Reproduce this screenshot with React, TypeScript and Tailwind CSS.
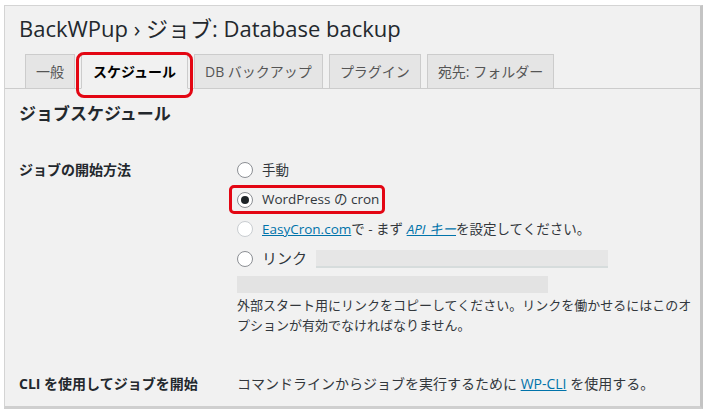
import React from "react";

const tabs = ["一般", "スケジュール", "DB バックアップ", "プラグイン", "宛先: フォルダー"];

const Radio = ({ checked = false, faded = false }: { checked?: boolean; faded?: boolean }) => (
  <span
    className={`w-[16px] h-[16px] rounded-full bg-white border flex items-center justify-center shrink-0 ${
      faded ? "border-[#c9cdd1]" : "border-[#8c8f94]"
    }`}
  >
    {checked && <span className="w-[8px] h-[8px] rounded-full bg-[#1d2327]" />}
  </span>
);

export default function App() {
  return (
    <div className="w-[708px] h-[415px] bg-white pt-[5px] pl-[4px] font-['Open_Sans','Noto_Sans_CJK_JP',sans-serif] text-[#23282d]">
      <div className="relative w-[699px] h-[404px] bg-[#f1f1f1] border border-[#d4d4d4] border-r-[3px] border-r-[#c4c4c4] border-b-[3px] border-b-[#cfcfcf]">
        <h1 className="pl-[14px] pt-[7px] h-[44px] text-[22px] leading-[30px] font-normal text-[#23282d] whitespace-nowrap">
          BackWPup › ジョブ: Database backup
        </h1>

        <div className="flex gap-[6px] pl-[20px] border-b border-[#cccccc] h-[39px] items-end">
          {tabs.map((t, i) =>
            i === 1 ? (
              <div
                key={t}
                className="h-[35px] -mb-px px-[11px] flex items-center bg-[#f1f1f1] border border-[#cccccc] border-b-[#f1f1f1] text-[14px] font-bold text-black"
              >
                {t}
              </div>
            ) : (
              <div
                key={t}
                className="h-[34px] px-[10px] flex items-center bg-[#e5e5e5] border border-[#cccccc] border-b-0 text-[14px] font-normal text-[#555]"
              >
                {t}
              </div>
            )
          )}
        </div>

        <div className="absolute left-[71px] top-[46px] w-[117px] h-[46px] border-[3px] border-[#e30613] rounded-[8px]" />

        <h2 className="pl-[14px] pt-[13px] text-[17px] leading-[24px] font-bold text-[#23282d]">ジョブスケジュール</h2>

        <div className="flex pl-[14px] mt-[29px]">
          <div className="w-[218px] text-[14px] font-bold leading-[20px] pt-[5px]">ジョブの開始方法</div>
          <div className="flex flex-col text-[13.5px] text-[#32373c]">
            <div className="flex items-center gap-[9px] h-[30px]">
              <Radio />
              <span>手動</span>
            </div>
            <div className="relative flex items-center gap-[9px] h-[29px]">
              <Radio checked />
              <span>WordPress の cron</span>
              <div className="absolute -left-[8px] top-[0px] w-[156px] h-[29px] border-[3px] border-[#e30613] rounded-[5px]" />
            </div>
            <div className="flex items-center gap-[9px] h-[30px]">
              <Radio faded />
              <span>
                <span className="text-[#0073aa] underline">EasyCron.com</span>で - まず{" "}
                <span className="text-[#0073aa] underline italic">API キー</span>を設定してください。
              </span>
            </div>
            <div className="flex items-center gap-[9px] h-[29px]">
              <Radio />
              <span className="text-[15px]">リンク</span>
              <span className="w-[292px] h-[18px] bg-[#e6e6e6] border-b-2 border-[#d6dcdc]" />
            </div>
            <div className="w-[311px] h-[17px] bg-[#e3e3e3] mt-[3px]" />
            <p className="text-[13px] leading-[20px] mt-[2px] text-[#32373c] w-[460px]">
              外部スタート用にリンクをコピーしてください。リンクを働かせるにはこのオプションが有効でなければなりません。
            </p>
          </div>
        </div>

        <div className="flex pl-[14px] mt-[39px] text-[14px] leading-[20px]">
          <div className="w-[218px] font-bold">CLI を使用してジョブを開始</div>
          <div className="text-[#32373c]">
            コマンドラインからジョブを実行するために <span className="text-[#0073aa] underline">WP-CLI</span> を使用する。
          </div>
        </div>
      </div>
    </div>
  );
}
